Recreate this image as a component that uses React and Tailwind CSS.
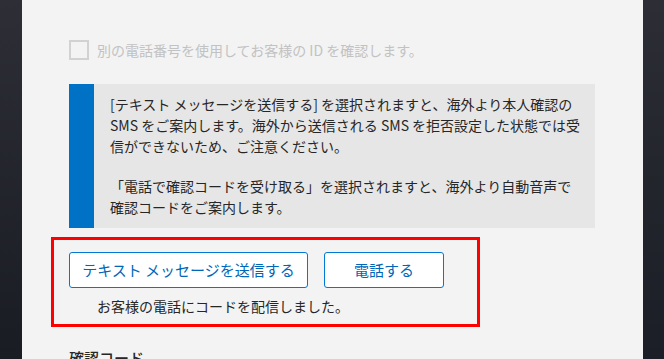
import React from "react";

export default function App() {
  const font = { fontFamily: '"Noto Sans CJK JP", "Noto Sans", sans-serif' };
  return (
    <div className="flex h-[359px] w-[664px] overflow-hidden" style={font}>
      <div className="w-[22px] shrink-0 bg-gradient-to-b from-[#2d2e36] to-[#1a1c24]" />
      <div className="flex-1 bg-[#f3f3f3] pl-[29px] pt-[40px]">
        <div className="ml-[18px] flex items-center gap-2">
          <div className="h-[20px] w-[20px] border-2 border-[#d2d2d2]" />
          <span className="text-[14px] leading-[20px] text-[#c2c2c2]">
            別の電話番号を使用してお客様の ID を確認します。
          </span>
        </div>

        <div className="ml-[18px] mt-[24px] flex w-[526px]">
          <div className="w-[25px] shrink-0 bg-[#0072c6]" />
          <div className="flex-1 bg-[#e6e6e6] py-[10px] pl-[16px] text-[14px] leading-[21px] text-[#262626] whitespace-nowrap">
            <p>
              [テキスト メッセージを送信する] を選択されますと、海外より本人確認の
              <br />
              SMS をご案内します。海外から送信される SMS を拒否設定した状態では受
              <br />
              信ができないため、ご注意ください。
            </p>
            <p className="mt-[19px]">
              「電話で確認コードを受け取る」を選択されますと、海外より自動音声で
              <br />
              確認コードをご案内します。
            </p>
          </div>
        </div>

        <div className="mt-[9px] h-[90px] w-[429px] border-[3px] border-[#ff0000] pl-[15px] pt-[12px]">
          <div className="flex gap-4">
            <button className="flex h-[36px] w-[239px] items-center justify-center rounded-[3px] border border-[#0078d4] bg-white text-[15px] text-[#0067b8]">
              テキスト メッセージを送信する
            </button>
            <button className="flex h-[36px] w-[120px] items-center justify-center rounded-[3px] border border-[#0078d4] bg-white text-[15px] text-[#0067b8]">
              電話する
            </button>
          </div>
          <div className="ml-[28px] mt-[8px] text-[14px] leading-[21px] text-[#262626]">
            お客様の電話にコードを配信しました。
          </div>
        </div>

        <div className="ml-[18px] mt-[20px] text-[15px] font-medium leading-[21px] text-[#262626]">
          確認コード
        </div>
      </div>
      <div className="w-[21px] shrink-0 bg-gradient-to-b from-[#2c2d35] to-[#1b1e26]" />
    </div>
  );
}
